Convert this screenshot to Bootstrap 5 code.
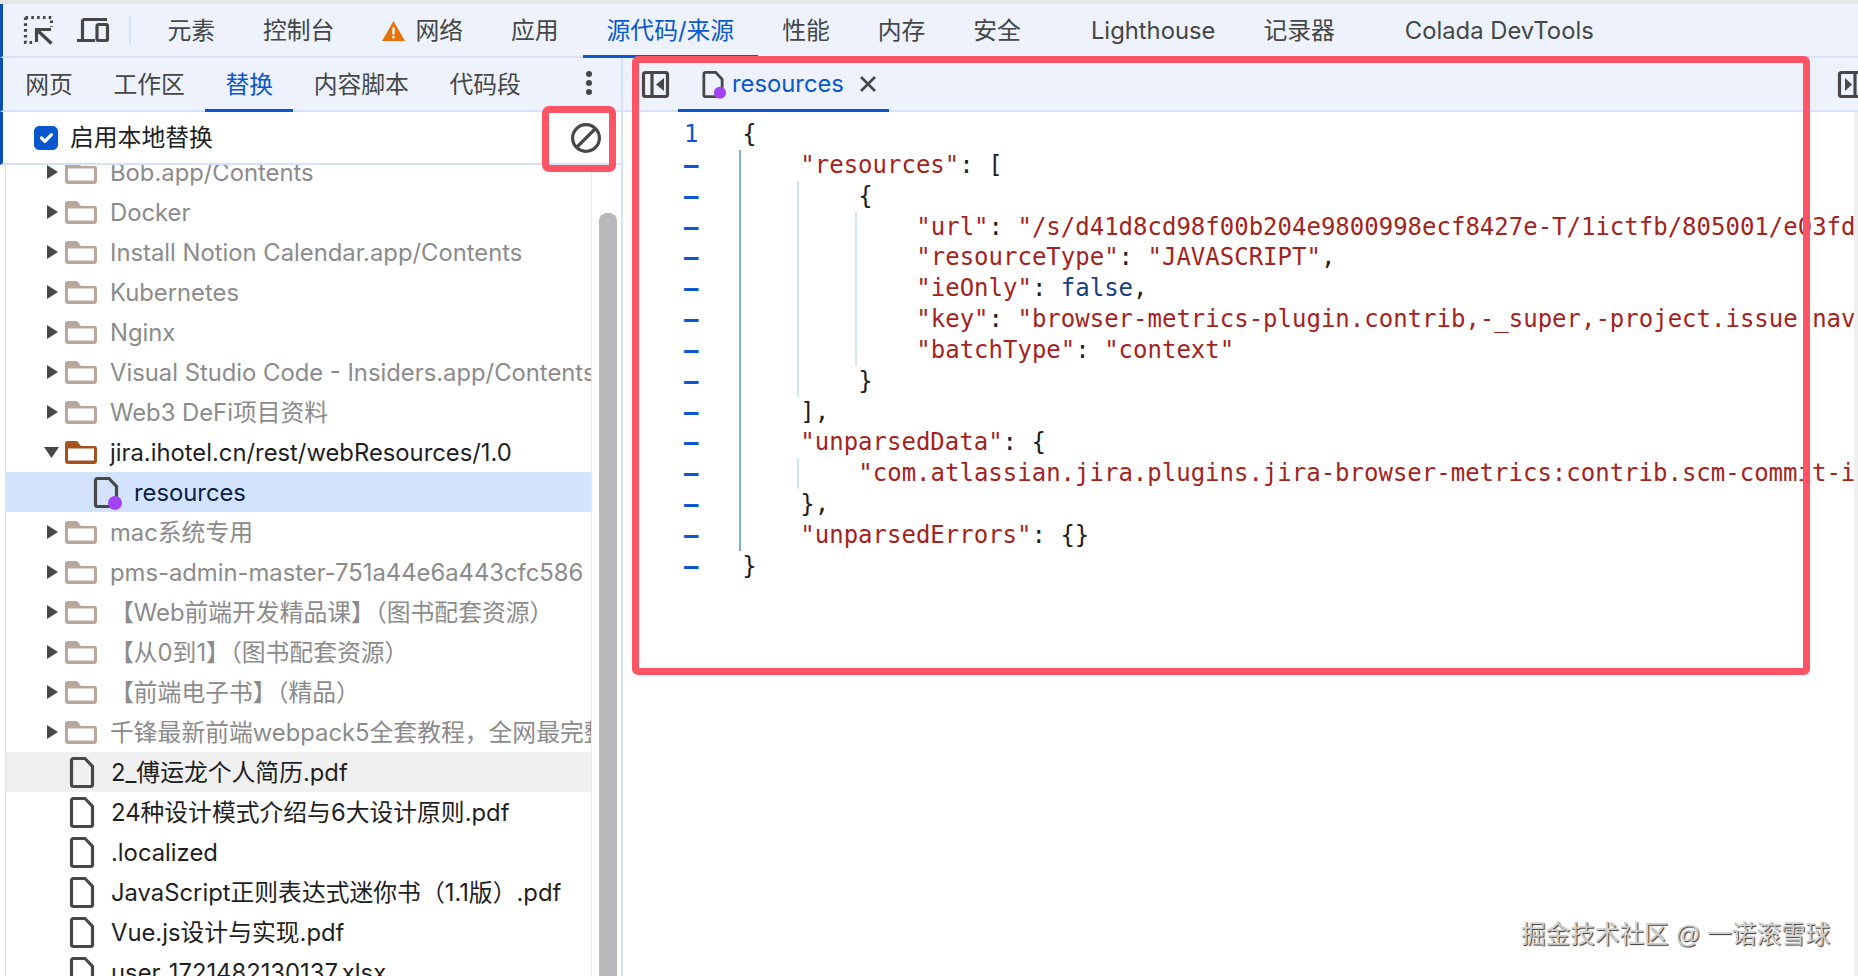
<!DOCTYPE html>
<html lang="zh-CN">
<head>
<meta charset="utf-8">
<title>DevTools</title>
<link href="https://cdn.jsdelivr.net/npm/bootstrap@5.3.0/dist/css/bootstrap.min.css" rel="stylesheet">
<style>
html,body{height:100%;margin:0;overflow:hidden;background:#fff}
body{position:relative;font-family:"Inter","Noto Sans CJK SC",sans-serif;font-size:23.8px;color:#444746}
.top-rule{height:4px;background:#e6e6e6}
.bar{background:#edf2fc;border-bottom:2px solid #d6e2fb;flex-shrink:0;white-space:nowrap}
.bar-main{height:54px;border-left:3px solid #0b4fb0;padding-left:21px}
.dt-tab{padding:3px 24px 0;display:flex;align-items:center;height:54px;margin-bottom:-2px;border-bottom:3px solid transparent;align-self:flex-start}
.ico{flex-shrink:0;display:block;fill:none;stroke:#474747;stroke-width:3.2;overflow:visible}
.sep{width:2px;height:30px;background:#d6e2fb;margin-left:20px}
.gap-l{margin-left:22px}
.warn{margin-right:10px}
.tab-first{margin-left:12.4px}
.body-row{height:918px}
.left-pane{width:623px;flex-shrink:0;border-right:2px solid #d6e2fb}
.bar-sub{height:54px;border-left:3px solid #0b4fb0;padding-left:2px}
.sub-tab{padding:3px 20.3px 0;height:54px;display:flex;align-items:center;margin-bottom:-2px;border-bottom:3px solid transparent;align-self:flex-start}
.dt-on{color:#0b57d0;border-bottom-color:#0b57d0}
.dots{margin-right:28px;margin-top:-3px}
.check-row{height:53px;border-left:3px solid #0b4fb0;border-bottom:2px solid #d6e2fb;padding-left:31px;color:#1f1f1f;flex-shrink:0}
.form-check-input.dt-check{width:24px;height:24px;margin:0;border-radius:5px;background-color:#0b57d0;border-color:#0b57d0}
.check-text{margin-left:12px;padding-top:1px}
.block-ico{margin-right:20px}
.tree-wrap{min-height:0;margin-left:2px;padding-left:3px}
.tree-clip{width:587px;overflow:hidden;border-left:1px solid #d6e2fb}
.tree-list{margin-top:-13px}
.t-row{height:40px;white-space:nowrap;overflow:hidden;padding-top:2px;padding-left:41px;color:#8b8b8b;font-size:23.8px}
.t-row .ico{margin-top:-2px}
.t-arrow{width:11px;margin-right:7px;fill:#474747;stroke:none}
.t-arrow-open{width:15px;margin-left:-3px;margin-right:6px;fill:#474747;stroke:none}
.t-folder{width:32px;height:23px;margin-right:13px;stroke:none;fill:#b8a79e;fill-rule:evenodd}
.t-open .t-folder{fill:#a5521f}
.t-open{color:#1f1f1f}
.t-sel{background:#d3e3fd;color:#0a1f44;padding-left:88px}
.t-file{color:#1f1f1f;padding-left:64px}
.t-file .ico{width:24px;height:31px;margin-right:17px}
.t-sel .ico{width:24px;height:31px;margin-right:16px}
.t-hover{background:#f0f0f0}
.dot-ring{fill:#a142f4;stroke:none}
.scroll-col{width:30px;border-left:1px solid #e8e8e8;padding:48px 4px 0 7px;flex-shrink:0}
.scroll-thumb{background:#b9b9b9;border-radius:8px 8px 0 0;height:100%}
.right-pane{min-width:0}
.bar-file{height:54px;padding-left:19px}
.file-tab{margin-left:9px;padding:1px 13px 0 24px;height:54px;margin-bottom:-2px;border-bottom:3px solid #0b57d0;color:#0b57d0;display:flex;align-items:center;font-size:23.8px;align-self:flex-start}
.file-tab .f-ico{width:22px;height:27px;margin-right:8px}
.x-ico{width:16px;height:16px;margin-left:16px;stroke:#444746;stroke-width:2.6}
.right-tog{margin-right:-7px}
.editor{min-height:0}
.code-area{font-family:"DejaVu Sans Mono","Liberation Mono",monospace;font-size:24px;line-height:30.84px;padding-top:7px;overflow:hidden;color:#1f1f1f}
.gutter{width:116px;padding-left:61px;flex-shrink:0;color:#0b57d0}
.dash{font-weight:700}
.code-col{min-width:0;overflow:hidden}
.ln{padding-left:3.3px;white-space:pre}
.blk{border-left:2px solid #d3e3fd;padding-left:56px}
.blk-on{border-left-color:#7fadde}
.s{color:#a5231d}
.k{color:#a5231d}
.b{color:#16407f}
.edge-strip{width:4px;background:#f0f0f0;flex-shrink:0}
.hl-box{position:absolute;border:7.5px solid #ff5366;pointer-events:none}
.hl-big{left:632px;top:56px;width:1178px;height:619px;border-radius:6px}
.hl-small{left:542px;top:106px;width:74px;height:66px;border-radius:7px}
.water{position:absolute;left:1521px;top:920px;font-size:24.6px;line-height:30px;color:#d0d0d0;text-shadow:1px 1px 1px #333;white-space:nowrap;font-family:"Liberation Sans","Noto Sans CJK SC",sans-serif}
</style>
</head>
<body>
<svg width="0" height="0" class="position-absolute">
  <symbol id="folder" viewBox="0 0 32 23">
    <path d="M0 2.5A2.5 2.5 0 0 1 2.5 0H12L16 5H29.500A2.500 2.500 0 0 1 32 7.500V20a3 3 0 0 1-3 3H3a3 3 0 0 1-3-3ZM3 7.500V19.500H29V7.500Z"/>
  </symbol>
  <symbol id="file" viewBox="0 0 24 31" overflow="visible">
    <path d="M3.500 1.500h11.500l7.500 8V27.500a2 2 0 0 1-2 2H3.500a2 2 0 0 1-2-2V3.500a2 2 0 0 1 2-2Z"/>
  </symbol>
</svg>

<div class="top-rule"></div>
<div class="bar bar-main d-flex align-items-center">
  <svg class="ico" width="29" height="28" viewBox="0 0 29 28"><path d="M1.500 1.500H27.500V11M1.500 1.500V26.500H11" stroke-dasharray="2.600 3.200"/><path d="M12.500 26V13.500H27M12.500 13.500 27.500 27.500"/></svg>
  <svg class="ico ms-4" width="32" height="24" viewBox="0 0 32 24"><path d="M5.500 1.500H30M5.500 1.500V22M0 22.500H18"/><rect x="20" y="6.500" width="10.500" height="16" rx="1.500"/></svg>
  <div class="sep"></div>
  <div class="dt-tab tab-first">元素</div>
  <div class="dt-tab">控制台</div>
  <div class="dt-tab"><svg class="warn" width="23" height="20" viewBox="0 0 23 20"><path d="M11.500 0 23 20H0Z" fill="#e8710a"/><rect x="10.300" y="6.500" width="2.400" height="7" fill="#fff"/><rect x="10.300" y="15" width="2.400" height="2.400" fill="#fff"/></svg>网络</div>
  <div class="dt-tab">应用</div>
  <div class="dt-tab dt-on">源代码/来源</div>
  <div class="dt-tab">性能</div>
  <div class="dt-tab">内存</div>
  <div class="dt-tab">安全</div>
  <div class="dt-tab gap-l">Lighthouse</div>
  <div class="dt-tab">记录器</div>
  <div class="dt-tab gap-l">Colada DevTools</div>
</div>

<div class="body-row d-flex">
  <div class="left-pane d-flex flex-column">
    <div class="bar bar-sub d-flex align-items-center">
      <div class="sub-tab">网页</div>
      <div class="sub-tab">工作区</div>
      <div class="sub-tab dt-on">替换</div>
      <div class="sub-tab">内容脚本</div>
      <div class="sub-tab">代码段</div>
      <svg class="ms-auto dots" width="8" height="26" viewBox="0 0 8 26"><circle cx="4" cy="4" r="3" fill="#474747"/><circle cx="4" cy="13" r="3" fill="#474747"/><circle cx="4" cy="22" r="3" fill="#474747"/></svg>
    </div>
    <div class="check-row d-flex align-items-center">
      <input class="form-check-input dt-check" type="checkbox" checked>
      <span class="check-text">启用本地替换</span>
      <svg class="ms-auto block-ico ico" width="30" height="30" viewBox="0 0 30 30"><circle cx="15" cy="15" r="13.400"/><path d="M6 24 24 6"/></svg>
    </div>
    <div class="tree-wrap d-flex flex-grow-1 overflow-hidden">
      <div class="tree-clip">
        <div class="tree-list">
          <div class="t-row d-flex align-items-center"><svg class="ico t-arrow" height="14" viewBox="0 0 11 14"><path d="M0 0 11 7 0 14Z"/></svg><svg class="ico t-folder"><use href="#folder"/></svg>Bob.app/Contents</div>
          <div class="t-row d-flex align-items-center"><svg class="ico t-arrow" height="14" viewBox="0 0 11 14"><path d="M0 0 11 7 0 14Z"/></svg><svg class="ico t-folder"><use href="#folder"/></svg>Docker</div>
          <div class="t-row d-flex align-items-center"><svg class="ico t-arrow" height="14" viewBox="0 0 11 14"><path d="M0 0 11 7 0 14Z"/></svg><svg class="ico t-folder"><use href="#folder"/></svg>Install Notion Calendar.app/Contents</div>
          <div class="t-row d-flex align-items-center"><svg class="ico t-arrow" height="14" viewBox="0 0 11 14"><path d="M0 0 11 7 0 14Z"/></svg><svg class="ico t-folder"><use href="#folder"/></svg>Kubernetes</div>
          <div class="t-row d-flex align-items-center"><svg class="ico t-arrow" height="14" viewBox="0 0 11 14"><path d="M0 0 11 7 0 14Z"/></svg><svg class="ico t-folder"><use href="#folder"/></svg>Nginx</div>
          <div class="t-row d-flex align-items-center"><svg class="ico t-arrow" height="14" viewBox="0 0 11 14"><path d="M0 0 11 7 0 14Z"/></svg><svg class="ico t-folder"><use href="#folder"/></svg>Visual Studio Code - Insiders.app/Contents</div>
          <div class="t-row d-flex align-items-center"><svg class="ico t-arrow" height="14" viewBox="0 0 11 14"><path d="M0 0 11 7 0 14Z"/></svg><svg class="ico t-folder"><use href="#folder"/></svg>Web3 DeFi项目资料</div>
          <div class="t-row t-open d-flex align-items-center"><svg class="ico t-arrow-open" height="11" viewBox="0 0 15 11"><path d="M0 0H15L7.500 11Z"/></svg><svg class="ico t-folder"><use href="#folder"/></svg>jira.ihotel.cn/rest/webResources/1.0</div>
          <div class="t-row t-sel d-flex align-items-center"><svg class="ico" viewBox="0 0 24 31"><use href="#file"/><circle class="dot-ring" cx="21" cy="26" r="7"/></svg>resources</div>
          <div class="t-row d-flex align-items-center"><svg class="ico t-arrow" height="14" viewBox="0 0 11 14"><path d="M0 0 11 7 0 14Z"/></svg><svg class="ico t-folder"><use href="#folder"/></svg>mac系统专用</div>
          <div class="t-row d-flex align-items-center"><svg class="ico t-arrow" height="14" viewBox="0 0 11 14"><path d="M0 0 11 7 0 14Z"/></svg><svg class="ico t-folder"><use href="#folder"/></svg>pms-admin-master-751a44e6a443cfc586</div>
          <div class="t-row d-flex align-items-center"><svg class="ico t-arrow" height="14" viewBox="0 0 11 14"><path d="M0 0 11 7 0 14Z"/></svg><svg class="ico t-folder"><use href="#folder"/></svg>【Web前端开发精品课】（图书配套资源）</div>
          <div class="t-row d-flex align-items-center"><svg class="ico t-arrow" height="14" viewBox="0 0 11 14"><path d="M0 0 11 7 0 14Z"/></svg><svg class="ico t-folder"><use href="#folder"/></svg>【从0到1】（图书配套资源）</div>
          <div class="t-row d-flex align-items-center"><svg class="ico t-arrow" height="14" viewBox="0 0 11 14"><path d="M0 0 11 7 0 14Z"/></svg><svg class="ico t-folder"><use href="#folder"/></svg>【前端电子书】（精品）</div>
          <div class="t-row d-flex align-items-center"><svg class="ico t-arrow" height="14" viewBox="0 0 11 14"><path d="M0 0 11 7 0 14Z"/></svg><svg class="ico t-folder"><use href="#folder"/></svg>千锋最新前端webpack5全套教程，全网最完整</div>
          <div class="t-row t-file t-hover d-flex align-items-center"><svg class="ico" viewBox="0 0 24 31"><use href="#file"/></svg>2_傅运龙个人简历.pdf</div>
          <div class="t-row t-file d-flex align-items-center"><svg class="ico" viewBox="0 0 24 31"><use href="#file"/></svg>24种设计模式介绍与6大设计原则.pdf</div>
          <div class="t-row t-file d-flex align-items-center"><svg class="ico" viewBox="0 0 24 31"><use href="#file"/></svg>.localized</div>
          <div class="t-row t-file d-flex align-items-center"><svg class="ico" viewBox="0 0 24 31"><use href="#file"/></svg>JavaScript正则表达式迷你书（1.1版）.pdf</div>
          <div class="t-row t-file d-flex align-items-center"><svg class="ico" viewBox="0 0 24 31"><use href="#file"/></svg>Vue.js设计与实现.pdf</div>
          <div class="t-row t-file d-flex align-items-center"><svg class="ico" viewBox="0 0 24 31"><use href="#file"/></svg>user_1721482130137.xlsx</div>
        </div>
      </div>
      <div class="scroll-col"><div class="scroll-thumb"></div></div>
    </div>
  </div>

  <div class="right-pane flex-grow-1 d-flex flex-column">
    <div class="bar bar-file d-flex align-items-center">
      <svg class="ico" width="27" height="27" viewBox="0 0 27 27"><rect x="1.500" y="1.500" width="24" height="24" rx="2"/><path d="M10 1.500V25.500"/><path d="M22 7V20L14 13.500Z" fill="#474747" stroke="none"/></svg>
      <div class="file-tab"><svg class="ico f-ico" viewBox="0 0 24 31"><use href="#file"/><circle class="dot-ring" cx="20" cy="25" r="7"/></svg>resources<svg class="ico x-ico" viewBox="0 0 16 16"><path d="M1 1 15 15M15 1 1 15"/></svg></div>
      <svg class="ico ms-auto right-tog" width="27" height="27" viewBox="0 0 27 27"><rect x="1.500" y="1.500" width="24" height="24" rx="2"/><path d="M17 1.500V25.500"/><path d="M7 7V20L14 13.500Z" fill="#474747" stroke="none"/></svg>
    </div>
    <div class="editor flex-grow-1 d-flex">
      <div class="code-area flex-grow-1 d-flex">
        <div class="gutter">
          <div>1</div>
          <div class="dash">–</div><div class="dash">–</div><div class="dash">–</div><div class="dash">–</div><div class="dash">–</div><div class="dash">–</div><div class="dash">–</div><div class="dash">–</div><div class="dash">–</div><div class="dash">–</div><div class="dash">–</div><div class="dash">–</div><div class="dash">–</div><div class="dash">–</div>
        </div>
        <div class="code-col flex-grow-1">
          <div class="ln">{</div>
          <div class="blk blk-on">
            <div class="ln"><span class="k">"resources"</span>: [</div>
            <div class="blk">
              <div class="ln">{</div>
              <div class="blk">
                <div class="ln"><span class="k">"url"</span>: <span class="s">"/s/d41d8cd98f00b204e9800998ecf8427e-T/1ictfb/805001/e03fd1b0/1.0/_/download/batch"</span>,</div>
                <div class="ln"><span class="k">"resourceType"</span>: <span class="s">"JAVASCRIPT"</span>,</div>
                <div class="ln"><span class="k">"ieOnly"</span>: <span class="b">false</span>,</div>
                <div class="ln"><span class="k">"key"</span>: <span class="s">"browser-metrics-plugin.contrib,-_super,-project.issue.navigator,-jira.view.issue"</span>,</div>
                <div class="ln"><span class="k">"batchType"</span>: <span class="s">"context"</span></div>
              </div>
              <div class="ln">}</div>
            </div>
            <div class="ln">],</div>
            <div class="ln"><span class="k">"unparsedData"</span>: {</div>
            <div class="blk">
              <div class="ln"><span class="s">"com.atlassian.jira.plugins.jira-browser-metrics:contrib.scm-commit-indexer"</span></div>
            </div>
            <div class="ln">},</div>
            <div class="ln"><span class="k">"unparsedErrors"</span>: {}</div>
          </div>
          <div class="ln">}</div>
        </div>
      </div>
      <div class="edge-strip"></div>
    </div>
  </div>
</div>

<div class="hl-box hl-big"></div>
<div class="hl-box hl-small"></div>
<div class="water">掘金技术社区 @ 一诺滚雪球</div>

<script src="https://cdn.jsdelivr.net/npm/bootstrap@5.3.0/dist/js/bootstrap.bundle.min.js"></script>
</body>
</html>
